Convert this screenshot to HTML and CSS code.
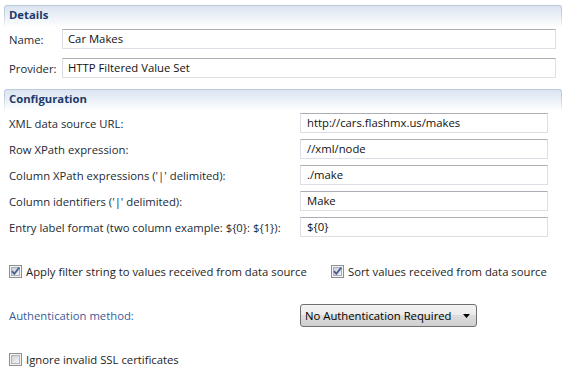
FILE: index.html
```html
<!DOCTYPE html>
<html>
<head>
<meta charset="utf-8">
<link rel="stylesheet" href="styles.css">
</head>
<body>
<div class="form">
  <section class="sec">
    <div class="sec-head"><span>Details</span></div>
    <div class="sec-body details">
      <label class="lbl">Name:</label>
      <div class="input">Car Makes</div>
      <label class="lbl">Provider:</label>
      <div class="input">HTTP Filtered Value Set</div>
    </div>
  </section>

  <section class="sec sec-config">
    <div class="sec-head"><span>Configuration</span></div>
    <div class="sec-body config">
      <label class="lbl">XML data source URL:</label>
      <div class="input">http://cars.flashmx.us/makes</div>
      <label class="lbl">Row XPath expression:</label>
      <div class="input">//xml/node</div>
      <label class="lbl">Column XPath expressions ('|' delimited):</label>
      <div class="input">./make</div>
      <label class="lbl">Column identifiers ('|' delimited):</label>
      <div class="input">Make</div>
      <label class="lbl">Entry label format (two column example: ${0}: ${1}):</label>
      <div class="input">${0}</div>
    </div>

    <div class="checks">
      <div class="check first">
        <svg class="cb" width="13" height="13" viewBox="0 0 13 13">
          <defs>
            <linearGradient id="gc" x1="0" y1="0" x2="1" y2="1">
              <stop offset="0" stop-color="#c9cfd8"/>
              <stop offset="1" stop-color="#f3f4f6"/>
            </linearGradient>
          </defs>
          <rect x="0.5" y="0.5" width="12" height="12" fill="#f4f4f4" stroke="#8e8f8f"/>
          <rect x="2.5" y="2.5" width="8" height="8" fill="url(#gc)" stroke="#a9b0ba"/>
          <path d="M3 6.2 L5.3 8.8 L10.2 2.6" fill="none" stroke="#4b5f8f" stroke-width="1.8" stroke-linejoin="miter"/>
        </svg>
        <span>Apply filter string to values received from data source</span>
      </div>
      <div class="check">
        <svg class="cb" width="13" height="13" viewBox="0 0 13 13">
          <rect x="0.5" y="0.5" width="12" height="12" fill="#f4f4f4" stroke="#8e8f8f"/>
          <rect x="2.5" y="2.5" width="8" height="8" fill="url(#gc)" stroke="#a9b0ba"/>
          <path d="M3 6.2 L5.3 8.8 L10.2 2.6" fill="none" stroke="#4b5f8f" stroke-width="1.8" stroke-linejoin="miter"/>
        </svg>
        <span>Sort values received from data source</span>
      </div>
    </div>

    <div class="auth">
      <label class="lbl link">Authentication method:</label>
      <div class="combo">
        <span>No Authentication Required</span>
        <svg class="arrow" width="7" height="4" viewBox="0 0 7 4"><path d="M0 0 H7 L3.5 4 Z" fill="#000"/></svg>
      </div>
    </div>

    <div class="checks last">
      <div class="check">
        <svg class="cb" width="13" height="13" viewBox="0 0 13 13">
          <defs>
            <linearGradient id="gu" x1="0" y1="0" x2="1" y2="1">
              <stop offset="0" stop-color="#cfd1d4"/>
              <stop offset="1" stop-color="#f5f5f5"/>
            </linearGradient>
          </defs>
          <rect x="0.5" y="0.5" width="12" height="12" fill="#f4f4f4" stroke="#8e8f8f"/>
          <rect x="2.5" y="2.5" width="8" height="8" fill="url(#gu)" stroke="#b0b3b8"/>
        </svg>
        <span>Ignore invalid SSL certificates</span>
      </div>
    </div>
  </section>
</div>
</body>
</html>
```
FILE: styles.css
```css
html, body {
  margin: 0;
  background: #ffffff;
}

body {
  font-family: "Open Sans", "Liberation Sans", sans-serif;
  font-size: 11.3px;
  color: #1e1e1e;
}

.form {
  padding: 5px 6px 0 4px;
}

.sec-head {
  position: relative;
  height: 22px;
  padding-left: 5px;
  background: linear-gradient(#d9e3f0, #edf2f8 55%, #ffffff);
  border-radius: 3px 3px 0 0;
  font-weight: bold;
  color: #1c3a6a;
  line-height: 20px;
  box-sizing: border-box;
}

.sec-head::before {
  content: "";
  position: absolute;
  inset: 0;
  border: 1px solid #bccbdc;
  border-bottom: 0;
  border-radius: 3px 3px 0 0;
  -webkit-mask-image: linear-gradient(#000 0, #000 30%, transparent 100%);
  mask-image: linear-gradient(#000 0, #000 30%, transparent 100%);
}

.sec-head span {
  position: relative;
}

.sec-body {
  display: grid;
  align-items: center;
  margin-top: 2px;
  padding-left: 5px;
}

.details {
  grid-template-columns: 53px 1fr;
  row-gap: 9px;
  padding-right: 6px;
}

.config {
  grid-template-columns: 291px 1fr;
  row-gap: 6px;
  padding-right: 14px;
}

.sec-config {
  margin-top: 11px;
}

.lbl {
  color: #222a35;
  white-space: nowrap;
}

.lbl.link {
  color: #3a5b9b;
}

.input {
  height: 20px;
  box-sizing: border-box;
  border: 1px solid #dcdfe5;
  border-top-color: #abadb3;
  border-radius: 1px;
  padding-left: 5px;
  line-height: 17px;
  color: #111;
  white-space: nowrap;
  overflow: hidden;
}

.config .input {
  padding-left: 6px;
}

.checks {
  display: flex;
  align-items: center;
  height: 16px;
  margin-top: 26px;
  padding-left: 5px;
}

.check {
  display: flex;
  align-items: center;
  gap: 4px;
  white-space: nowrap;
}

.check.first {
  width: 322px;
}

.cb {
  display: block;
  flex: none;
}

.auth {
  display: grid;
  grid-template-columns: 291px 177px;
  align-items: center;
  margin-top: 25px;
  padding-left: 5px;
}

.combo {
  height: 23px;
  box-sizing: border-box;
  border: 1px solid #707070;
  border-radius: 3px;
  background: linear-gradient(#f2f2f2 0, #ebebeb 50%, #dddddd 50%, #cfcfcf 100%);
  display: flex;
  align-items: center;
  justify-content: space-between;
  padding: 0 6px 0 4px;
  color: #000;
  white-space: nowrap;
}

.arrow {
  display: block;
  margin-top: 1px;
}

.checks.last {
  margin-top: 24px;
}
```
